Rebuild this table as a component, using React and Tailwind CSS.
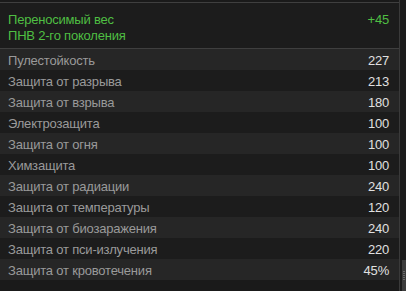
import React from "react";

const stats = [
  { name: "Пулестойкость", value: "227" },
  { name: "Защита от разрыва", value: "213" },
  { name: "Защита от взрыва", value: "180" },
  { name: "Электрозащита", value: "100" },
  { name: "Защита от огня", value: "100" },
  { name: "Химзащита", value: "100" },
  { name: "Защита от радиации", value: "240" },
  { name: "Защита от температуры", value: "120" },
  { name: "Защита от биозаражения", value: "240" },
  { name: "Защита от пси-излучения", value: "220" },
  { name: "Защита от кровотечения", value: "45%" },
];

function StatRow({ stat, index }) {
  return (
    <div
      className={`flex justify-between items-center h-[21px] pl-[8px] pr-[10px] pt-[2px] ${
        index % 2 === 0 ? "bg-[#262626]" : "bg-[#1c1c1c]"
      }`}
    >
      <span className="text-[#9a9a9a]">{stat.name}</span>
      <span className="text-[#e0e0e0]">{stat.value}</span>
    </div>
  );
}

export default function App() {
  return (
    <div
      className="w-[406px] h-[291px] bg-[#1a1a1a] flex overflow-hidden text-[13px] leading-[16px] tracking-[-0.2px]"
      style={{ fontFamily: '"Liberation Sans", Arial, sans-serif' }}
    >
      {/* Stats panel */}
      <div className="w-[400px] flex flex-col pt-[2px] border-r border-[#3a3a3a]">
        <div className="border-t border-b border-[#3f3f3f] bg-[#1c1c1c] h-[47px] flex justify-between pl-[8px] pr-[10px] pt-[9px]">
          <div className="text-[#4fbf43]">
            <div>Переносимый вес</div>
            <div>ПНВ 2-го поколения</div>
          </div>
          <div className="text-[#4fbf43]">+45</div>
        </div>
        {stats.map((stat, i) => (
          <StatRow key={stat.name} stat={stat} index={i} />
        ))}
      </div>
      {/* Scrollbar */}
      <div className="w-[6px] flex flex-col justify-end pl-[2px] bg-[#1c1c1c]">
        <div className="h-[31px] bg-[#3c3c3c] flex flex-col justify-center gap-[1px] px-[1px]">
          <div className="h-px bg-[#6a6a6a]" />
          <div className="h-px bg-[#6a6a6a]" />
          <div className="h-px bg-[#6a6a6a]" />
          <div className="h-px bg-[#6a6a6a]" />
          <div className="h-px bg-[#6a6a6a]" />
        </div>
      </div>
    </div>
  );
}
